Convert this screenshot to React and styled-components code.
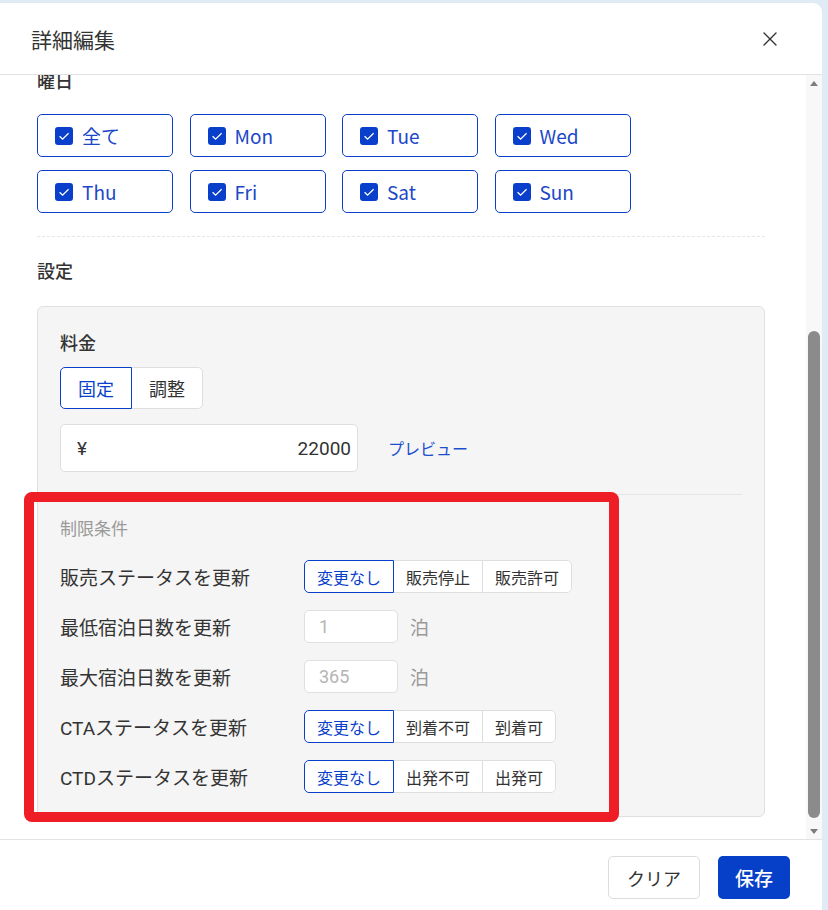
import React, { useLayoutEffect, useRef, useState } from 'react'
import styled, { createGlobalStyle } from 'styled-components'
import { X } from 'lucide-react'

const BLUE = '#0a3fcb'

const GlobalStyle = createGlobalStyle`
  html, body {
    margin: 0;
    padding: 0;
    background: #e1ebf5;
  }
  body {
    font-family: Roboto, "Noto Sans CJK JP", sans-serif;
    color: #333;
  }
`

const days = ['全て', 'Mon', 'Tue', 'Wed', 'Thu', 'Fri', 'Sat', 'Sun']
const rooms = ['スタンダード', 'デラックス', 'ツイン', 'スイート', '和室', '洋室']

const rules = [
  { label: '販売ステータスを更新', type: 'seg', options: ['変更なし', '販売停止', '販売許可'] },
  { label: '最低宿泊日数を更新', type: 'num', placeholder: '1' },
  { label: '最大宿泊日数を更新', type: 'num', placeholder: '365' },
  { label: 'CTAステータスを更新', type: 'seg', options: ['変更なし', '到着不可', '到着可'] },
  { label: 'CTDステータスを更新', type: 'seg', options: ['変更なし', '出発不可', '出発可'] },
]

function Check() {
  return (
    <CheckBox>
      <svg width="18" height="18" viewBox="0 0 18 18">
        <path d="M4.6 9.2l3 3L13.6 6.2" fill="none" stroke="#fff" strokeWidth="1.3" />
      </svg>
    </CheckBox>
  )
}

function App() {
  const bodyRef = useRef(null)
  const [thumb, setThumb] = useState(100)

  // the dialog opens scrolled down to the settings panel
  useLayoutEffect(() => {
    const el = bodyRef.current
    if (!el) return
    el.scrollTop = el.scrollHeight
    setThumb((el.clientHeight / el.scrollHeight) * 100)
  }, [])

  return (
    <Page>
      <GlobalStyle />
      <Dialog>
        <Header>
          <Title>詳細編集</Title>
          <Close aria-label="閉じる">
            <X size={24} strokeWidth={1.4} />
          </Close>
        </Header>

        <BodyWrap>
          <Body ref={bodyRef}>
            <Section>
              <Label>対象期間</Label>
              <DateRow>
                <TextInput>2024/04/01</TextInput>
                <span>〜</span>
                <TextInput>2024/04/30</TextInput>
              </DateRow>
            </Section>
            <Divider />
            <Section>
              <Label>部屋タイプ</Label>
              <DayGrid>
                {rooms.map((r) => (
                  <DayOption key={r}>
                    <Check />
                    {r}
                  </DayOption>
                ))}
              </DayGrid>
            </Section>
            <Divider />
            <Section>
              <Label>曜日</Label>
              <DayGrid>
                {days.map((d) => (
                  <DayOption key={d}>
                    <Check />
                    {d}
                  </DayOption>
                ))}
              </DayGrid>
            </Section>
            <Divider />
            <Section>
              <Label $gap={23}>設定</Label>
              <Panel>
                <FieldLabel>料金</FieldLabel>
                <Segmented>
                  <SegButton $active>固定</SegButton>
                  <SegButton>調整</SegButton>
                </Segmented>
                <PriceRow>
                  <PriceInput>
                    <span>¥</span>
                    <span>22000</span>
                  </PriceInput>
                  <LinkButton>プレビュー</LinkButton>
                </PriceRow>

                <Restrictions>
                  <SubTitle>制限条件</SubTitle>
                  {rules.map((rule) => (
                    <RuleRow key={rule.label}>
                      <RuleLabel>{rule.label}</RuleLabel>
                      {rule.type === 'seg' ? (
                        <Segmented>
                          {rule.options.map((o, i) => (
                            <SmallSeg key={o} $active={i === 0}>{o}</SmallSeg>
                          ))}
                        </Segmented>
                      ) : (
                        <NumberWrap>
                          <NumberInput placeholder={rule.placeholder} />
                          <Unit>泊</Unit>
                        </NumberWrap>
                      )}
                    </RuleRow>
                  ))}
                  <Highlight />
                </Restrictions>
              </Panel>
            </Section>
          </Body>

          <ScrollBar>
            <Arrow $dir="up" />
            <Track>
              <Thumb style={{ height: `${thumb}%` }} />
            </Track>
            <Arrow $dir="down" />
          </ScrollBar>
        </BodyWrap>

        <Footer>
          <GhostButton>クリア</GhostButton>
          <PrimaryButton>保存</PrimaryButton>
        </Footer>
      </Dialog>
    </Page>
  )
}

export default App

const Page = styled.div`
  height: 910px;
  padding: 3px 6px 0 0;
  box-sizing: border-box;
  overflow: hidden;
`

const Dialog = styled.div`
  height: 907px;
  background: #fff;
  border-top-right-radius: 9px;
  display: flex;
  flex-direction: column;
  overflow: hidden;
`

const Header = styled.div`
  flex: none;
  height: 72px;
  box-sizing: border-box;
  display: flex;
  align-items: center;
  justify-content: space-between;
  padding: 0 40px 0 31px;
  border-bottom: 1px solid #e2e2e2;
`

const Title = styled.h2`
  margin: 0;
  font-family: "Noto Sans CJK JP", sans-serif;
  font-size: 21px;
  font-weight: 400;
  color: #333;
`

const Close = styled.button`
  border: none;
  background: transparent;
  padding: 0;
  display: flex;
  color: #333;
  cursor: pointer;
`

const BodyWrap = styled.div`
  flex: 1;
  min-height: 0;
  display: flex;
`

const Body = styled.div`
  flex: 1;
  overflow: hidden;
  padding: 40px 41px 22px 37px;
`

const ScrollBar = styled.div`
  flex: none;
  width: 16px;
  background: #f8f8f8;
  display: flex;
  flex-direction: column;
`

const Arrow = styled.div`
  flex: none;
  height: 16px;
  display: flex;
  align-items: center;
  justify-content: center;
  &::after {
    content: '';
    border-left: 4px solid transparent;
    border-right: 4px solid transparent;
    ${(p) => (p.$dir === 'up' ? 'border-bottom' : 'border-top')}: 5px solid #7c7c7c;
  }
`

const Track = styled.div`
  flex: 1;
  display: flex;
  flex-direction: column;
  justify-content: flex-end;
  padding: 0 2px 5px;
`

const Thumb = styled.div`
  background: #8b8b8b;
  border-radius: 6px;
`

const Section = styled.section`
  display: flex;
  flex-direction: column;
`

const Label = styled.div`
  font-family: "Noto Sans CJK JP", sans-serif;
  font-size: 18px;
  line-height: 26px;
  font-weight: 500;
  color: #333;
  margin-bottom: ${(p) => p.$gap || 21}px;
`

const DateRow = styled.div`
  display: flex;
  align-items: center;
  gap: 12px;
  font-size: 18px;
`

const TextInput = styled.div`
  width: 200px;
  height: 48px;
  box-sizing: border-box;
  border: 1px solid #ddd;
  border-radius: 5px;
  display: flex;
  align-items: center;
  padding: 0 15px;
  font-size: 18px;
`

const Divider = styled.hr`
  border: none;
  border-top: 1px dashed #e6e6e6;
  margin: 23px 0 20px;
`

const DayGrid = styled.div`
  display: grid;
  grid-template-columns: repeat(4, 136px);
  column-gap: 16.5px;
  row-gap: 13px;
`

const DayOption = styled.label`
  height: 43px;
  box-sizing: border-box;
  border: 1px solid ${BLUE};
  border-radius: 5px;
  display: flex;
  align-items: center;
  gap: 9px;
  padding-left: 17px;
  font-family: "Noto Sans CJK JP", sans-serif;
  font-size: 19px;
  color: #1b47c8;
  white-space: nowrap;
`

const CheckBox = styled.span`
  width: 18px;
  height: 18px;
  border-radius: 3px;
  background: ${BLUE};
  display: flex;
  flex: none;
`

const Panel = styled.div`
  background: #f5f5f5;
  border: 1px solid #e0e0e0;
  border-radius: 6px;
  padding: 22px 22px 23px;
  display: flex;
  flex-direction: column;
  align-items: flex-start;
`

const FieldLabel = styled.div`
  font-family: "Noto Sans CJK JP", sans-serif;
  font-size: 18px;
  line-height: 26px;
  font-weight: 500;
  margin-bottom: 12px;
`

const Segmented = styled.div`
  display: flex;
  background: #fff;
  border-radius: 5px;
`

const SegButton = styled.button`
  height: 42px;
  padding: 0 17px;
  background: #fff;
  font-family: "Noto Sans CJK JP", sans-serif;
  font-size: 18px;
  color: ${(p) => (p.$active ? BLUE : '#333')};
  border: 1px solid ${(p) => (p.$active ? BLUE : '#dedede')};
  margin-left: -1px;
  position: relative;
  z-index: ${(p) => (p.$active ? 1 : 0)};
  &:first-child {
    margin-left: 0;
    border-radius: 5px 0 0 5px;
  }
  &:last-child {
    border-radius: 0 5px 5px 0;
  }
`

const SmallSeg = styled(SegButton)`
  height: 33px;
  padding: 0 12px;
  font-size: 16px;
`

const PriceRow = styled.div`
  display: flex;
  align-items: center;
  gap: 30px;
  margin-top: 15px;
`

const PriceInput = styled.div`
  width: 298px;
  height: 48px;
  box-sizing: border-box;
  background: #fff;
  border: 1px solid #dedede;
  border-radius: 5px;
  display: flex;
  align-items: center;
  justify-content: space-between;
  padding: 0 6px 0 16px;
  font-size: 19px;
  color: #333;
`

const LinkButton = styled.button`
  border: none;
  background: transparent;
  padding: 0;
  font-family: "Noto Sans CJK JP", sans-serif;
  font-size: 16px;
  color: #1b4fcf;
  cursor: pointer;
`

const Restrictions = styled.div`
  position: relative;
  align-self: stretch;
  margin-top: 22px;
  padding-top: 20px;
  border-top: 1px solid #e6e6e6;
  display: flex;
  flex-direction: column;
  gap: 17px;
`

const SubTitle = styled.div`
  font-family: "Noto Sans CJK JP", sans-serif;
  font-size: 17px;
  line-height: 26px;
  color: #9a9a9a;
  margin-bottom: 2px;
`

const RuleRow = styled.div`
  display: flex;
  align-items: center;
  height: 33px;
`

const RuleLabel = styled.div`
  width: 244px;
  flex: none;
  font-size: 19px;
  color: #333;
`

const NumberWrap = styled.div`
  display: flex;
  align-items: center;
  gap: 12px;
`

const NumberInput = styled.input`
  width: 94px;
  height: 33px;
  box-sizing: border-box;
  border: 1px solid #e0e0e0;
  border-radius: 5px;
  background: #fff;
  padding: 0 14px;
  font-family: Roboto, sans-serif;
  font-size: 18px;
  &::placeholder {
    color: #b5b5b5;
  }
`

const Unit = styled.span`
  font-size: 19px;
  color: #999;
`

const Highlight = styled.div`
  position: absolute;
  top: -3px;
  left: -36px;
  right: 123px;
  bottom: -29px;
  border: 10px solid #ee1d26;
  border-radius: 8px;
  pointer-events: none;
`

const Footer = styled.div`
  flex: none;
  height: 71px;
  box-sizing: border-box;
  border-top: 1px solid #e2e2e2;
  display: flex;
  justify-content: flex-end;
  align-items: flex-start;
  gap: 18px;
  padding: 16px 32px 0 0;
`

const GhostButton = styled.button`
  height: 43px;
  padding: 0 18px;
  background: #fff;
  border: 1px solid #dcdcdc;
  border-radius: 5px;
  font-family: "Noto Sans CJK JP", sans-serif;
  font-size: 18px;
  color: #333;
`

const PrimaryButton = styled.button`
  height: 43px;
  padding: 0 17px;
  background: #0640c8;
  border: none;
  border-radius: 5px;
  font-family: "Noto Sans CJK JP", sans-serif;
  font-size: 19px;
  font-weight: 500;
  color: #fff;
`
